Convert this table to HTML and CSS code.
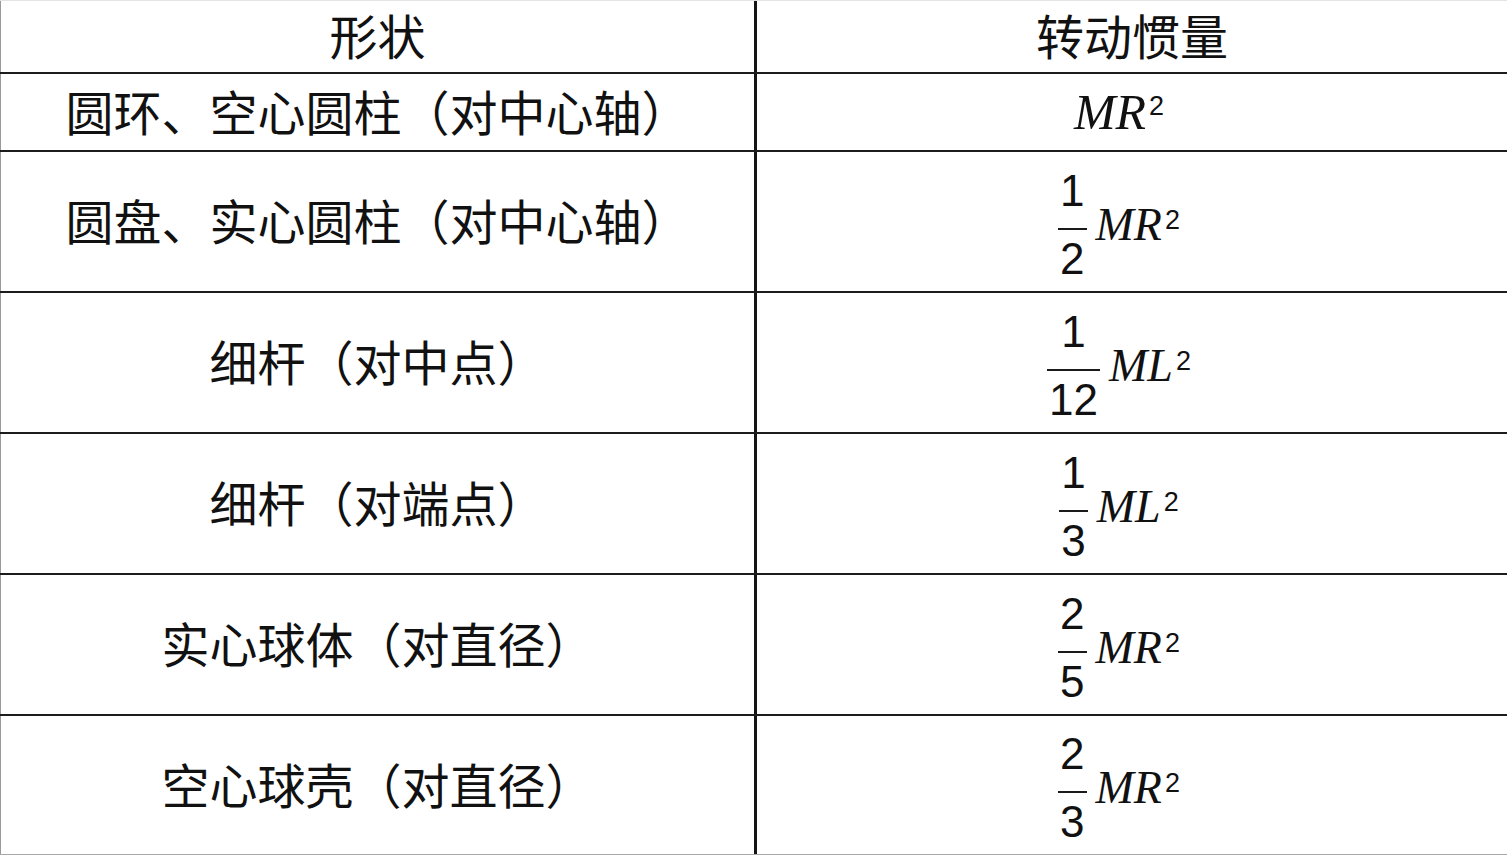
FILE: index.html
```html
<!DOCTYPE html>
<html lang="zh">
<head>
<meta charset="utf-8">
<title>转动惯量</title>
<link rel="stylesheet" href="styles.css">
</head>
<body>
<div class="table">
  <div class="row head">
    <div class="cell shape">形状</div>
    <div class="cell moment head-moment">转动惯量</div>
  </div>
  <div class="row single">
    <div class="cell shape">圆环、空心圆柱（对中心轴）</div>
    <div class="cell moment">
      <span class="vars big">MR<span class="sup">2</span></span>
    </div>
  </div>
  <div class="row frac-row">
    <div class="cell shape">圆盘、实心圆柱（对中心轴）</div>
    <div class="cell moment with-frac">
      <span class="frac"><span class="num">1</span><span class="bar"></span><span class="den">2</span></span>
      <span class="vars">MR<span class="sup">2</span></span>
    </div>
  </div>
  <div class="row frac-row">
    <div class="cell shape">细杆（对中点）</div>
    <div class="cell moment with-frac">
      <span class="frac"><span class="num">1</span><span class="bar"></span><span class="den">12</span></span>
      <span class="vars">ML<span class="sup">2</span></span>
    </div>
  </div>
  <div class="row frac-row">
    <div class="cell shape">细杆（对端点）</div>
    <div class="cell moment with-frac">
      <span class="frac"><span class="num">1</span><span class="bar"></span><span class="den">3</span></span>
      <span class="vars">ML<span class="sup">2</span></span>
    </div>
  </div>
  <div class="row frac-row">
    <div class="cell shape">实心球体（对直径）</div>
    <div class="cell moment with-frac">
      <span class="frac"><span class="num">2</span><span class="bar"></span><span class="den">5</span></span>
      <span class="vars">MR<span class="sup">2</span></span>
    </div>
  </div>
  <div class="row frac-row last">
    <div class="cell shape">空心球壳（对直径）</div>
    <div class="cell moment with-frac">
      <span class="frac"><span class="num">2</span><span class="bar"></span><span class="den">3</span></span>
      <span class="vars">MR<span class="sup">2</span></span>
    </div>
  </div>
</div>
</body>
</html>
```
FILE: styles.css
```css
html, body {
  margin: 0;
  padding: 0;
  background: #ffffff;
}

body {
  width: 1507px;
  height: 855px;
  overflow: hidden;
}

.table {
  box-sizing: border-box;
  width: 1507px;
  height: 855px;
  border-top: 1px solid #e4e4e4;
  border-bottom: 1px solid #a8a8a8;
  display: flex;
  flex-direction: column;
}

.row {
  box-sizing: border-box;
  display: grid;
  grid-template-columns: 757px 750px;
  border-bottom: 2px solid #1c1c1c;
}

.row.head { height: 73px; }
.row.single { height: 78px; }
.row.frac-row { height: 141px; }
.row.last { height: 138px; border-bottom: none; }

.cell {
  box-sizing: border-box;
  display: flex;
  align-items: center;
  justify-content: center;
  color: #111111;
}

.shape {
  border-left: 1px solid #9a9a9a;
  border-right: 3px solid #141414;
  padding-bottom: 5px;
  font-family: "Noto Sans CJK SC", "Noto Sans", sans-serif;
  font-size: 48px;
  line-height: 1;
  text-spacing-trim: space-all;
  font-feature-settings: "halt" 0, "chws" 0;
  white-space: nowrap;
}

.moment {
  padding-right: 26px;
}

.head-moment {
  padding-right: 0;
  padding-bottom: 5px;
  font-family: "Noto Sans CJK SC", "Noto Sans", sans-serif;
  font-size: 48px;
  line-height: 1;
}

.with-frac {
  padding-top: 6px;
}

.frac {
  display: inline-flex;
  flex-direction: column;
  align-items: stretch;
  font-family: "Liberation Sans", Arial, sans-serif;
  font-size: 44px;
  line-height: 1;
  text-align: center;
}

.num {
  padding: 0 2px 15px;
}

.bar {
  height: 2px;
  background: #1a1a1a;
}

.den {
  padding: 7px 2px 0;
}

.vars {
  margin-left: 9px;
  font-family: "Liberation Serif", "Times New Roman", serif;
  font-style: italic;
  font-size: 46px;
  line-height: 1;
  white-space: nowrap;
}

.vars.big {
  margin-left: 0;
  font-size: 50px;
}

.sup {
  font-family: "Liberation Sans", Arial, sans-serif;
  font-style: normal;
  font-size: 27px;
  line-height: 0;
  vertical-align: 11px;
  margin-left: 3px;
}

.vars.big .sup {
  vertical-align: 14px;
}
```
